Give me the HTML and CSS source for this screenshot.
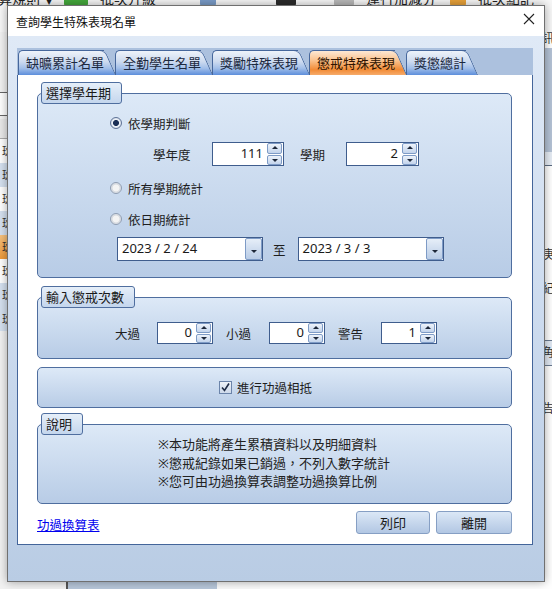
FILE: index.html
```html
<!DOCTYPE html>
<html lang="zh-Hant">
<head>
    <meta charset="UTF-8">
    <meta name="viewport" content="width=device-width, initial-scale=1.0">
    <title>查詢學生特殊表現名單</title>
    <link rel="stylesheet" href="styles.css">
</head>
<body>
    <!-- app behind the dialog -->
    <div class="app">
        <div class="app-bar">
            <span class="bar-text first">算規則</span>
            <span class="bar-caret">▾</span>
            <span class="bar-icon ic-green"></span>
            <span class="bar-text">批次升級</span>
            <span class="bar-icon ic-blue"></span>
            <span class="bar-icon ic-dark"></span>
            <span class="bar-icon ic-gray"></span>
            <span class="bar-text">運行加減分</span>
            <span class="bar-icon ic-orange"></span>
            <span class="bar-text">批次點記</span>
        </div>
        <div class="app-main">
            <div class="app-nav">
                <div class="nav-search"></div>
                <div class="nav-head"></div>
                <div class="nav-row">班</div>
                <div class="nav-row alt">班</div>
                <div class="nav-row">班</div>
                <div class="nav-row alt">班</div>
                <div class="nav-row sel">班</div>
                <div class="nav-row">班</div>
                <div class="nav-row alt">班</div>
                <div class="nav-row alt">班</div>
            </div>
            <div class="app-tree"></div>
            <div class="app-view">
                <div class="view-edge">
                    <div class="edge-top">訊</div>
                    <div class="edge-band"></div>
                    <div class="edge-light"></div>
                    <div class="edge-text t-a">庚</div>
                    <div class="edge-text t-b">紀</div>
                    <div class="edge-box">角</div>
                    <div class="edge-text t-c">告</div>
                </div>
            </div>
        </div>
    </div>

    <div class="dialog">
        <div class="titlebar">
            <span class="title">查詢學生特殊表現名單</span>
            <svg class="close" width="12" height="12" viewBox="0 0 12 12"><path d="M1 1L11 11M11 1L1 11" stroke="#222" stroke-width="1.1" fill="none"/></svg>
        </div>
        <div class="dialog-body">
            <div class="tabstrip">
                <div class="tab">缺曠累計名單</div>
                <div class="tab">全勤學生名單</div>
                <div class="tab">獎勵特殊表現</div>
                <div class="tab active">懲戒特殊表現</div>
                <div class="tab">獎懲總計</div>
            </div>
            <div class="panel">
                <div class="group g-term">
                    <div class="legend">選擇學年期</div>
                    <div class="row r-opt first"><span class="radio checked"></span>依學期判斷</div>
                    <div class="row r-term">
                        <span class="lbl w59">學年度</span>
                        <span class="spin w72"><span class="val">111</span><span class="btns"><span class="up"></span><span class="down"></span></span></span>
                        <span class="lbl w46 ml16">學期</span>
                        <span class="spin w73"><span class="val">2</span><span class="btns"><span class="up"></span><span class="down"></span></span></span>
                    </div>
                    <div class="row r-opt"><span class="radio"></span>所有學期統計</div>
                    <div class="row r-opt"><span class="radio"></span>依日期統計</div>
                    <div class="row r-date">
                        <span class="combo"><span class="date">2023 / 2 / 24</span><span class="drop"></span></span>
                        <span class="to">至</span>
                        <span class="combo"><span class="date">2023 / 3 / 3</span><span class="drop"></span></span>
                    </div>
                </div>

                <div class="group g-count">
                    <div class="legend">輸入懲戒次數</div>
                    <div class="row r-count">
                        <span class="lbl w42">大過</span>
                        <span class="spin small w56"><span class="val">0</span><span class="btns"><span class="up"></span><span class="down"></span></span></span>
                        <span class="lbl w43 ml13">小過</span>
                        <span class="spin small w56"><span class="val">0</span><span class="btns"><span class="up"></span><span class="down"></span></span></span>
                        <span class="lbl w43 ml13">警告</span>
                        <span class="spin small w56"><span class="val">1</span><span class="btns"><span class="up"></span><span class="down"></span></span></span>
                    </div>
                </div>

                <div class="group g-offset">
                    <div class="row r-check">
                        <span class="check"><svg width="11" height="11" viewBox="0 0 11 11"><path d="M2 5.5L4.5 8.5L9 1.5" stroke="#1e2b44" stroke-width="1.6" fill="none"/></svg></span>進行功過相抵
                    </div>
                </div>

                <div class="group g-note">
                    <div class="legend">說明</div>
                    <div class="notes">
                        ※本功能將產生累積資料以及明細資料<br>
                        ※懲戒紀錄如果已銷過，不列入數字統計<br>
                        ※您可由功過換算表調整功過換算比例
                    </div>
                </div>

                <div class="actions">
                    <a href="#" class="link">功過換算表</a>
                    <button type="button" class="btn w74">列印</button>
                    <button type="button" class="btn w76">離開</button>
                </div>
            </div>
        </div>
    </div>
</body>
</html>
```

FILE: styles.css
```css
* {box-sizing: border-box; margin: 0; padding: 0;}
body {width: 552px; height: 589px; overflow: hidden; position: relative; background: #fff; font-family: "Noto Sans", "Noto Sans CJK TC", sans-serif; font-size: 12.5px; color: #1e1e1e;}

/* background application */
.app {width: 552px; height: 589px; display: flex; flex-direction: column;}
.app-bar {height: 32px; background: #f7f7f7; display: flex; align-items: flex-start; overflow: hidden;}
.bar-text {font-size: 14px; line-height: 14px; margin-top: -8px; margin-left: 12px; color: #222;}
.bar-text.first {margin-left: -2px;}
.bar-caret {font-size: 12px; line-height: 10px; margin: -4px 0 0 6px;}
.bar-icon {width: 20px; height: 6px; margin-left: 14px; border-radius: 0 0 2px 2px;}
.ic-green {background: #45a83c; width: 24px; margin-left: 12px;}
.ic-blue {background: #7a9cc8; margin-left: 44px; width: 16px;}
.ic-dark {background: #2b2b2b; margin-left: 60px;}
.ic-gray {background: #b9b9b9; margin-left: 38px;}
.ic-orange {background: #e8a23a; width: 16px;}

.app-main {flex: 1; display: flex;}
.app-nav {width: 66px; background: #f2f2f2; padding-top: 60px;}
.nav-search {height: 24px; margin: 0 2px 0 -2px; background: #fff; border: 1px solid #666;}
.nav-head {height: 20px; margin-top: 3px; background: #e9e9e9; border-bottom: 1px solid #aaa;}
.nav-row {height: 24px; background: #fff; font-size: 11px; line-height: 24px; text-indent: 2px; color: #333;}
.nav-row.alt {background: #d5e1f0;}
.nav-row.sel {background: linear-gradient(#f7c27e, #ee9a3a);}
.app-tree {width: 151px; background: #b8c7da; border-left: 2px solid #555;}
.app-view {flex: 1; display: flex; justify-content: flex-end; background: #fff; border-left: 43px solid #fafafa;}
.view-edge {width: 10px; display: flex; flex-direction: column; font-size: 12px; color: #333;}
.edge-top {height: 16px; line-height: 14px;}
.edge-band {height: 104px; background: #b5c3d6;}
.edge-light {height: 14px; background: #e7edf5; border-bottom: 1px solid #5b6b80;}
.edge-text {line-height: 14px;}
.t-a {margin-top: 82px;}
.t-b {margin-top: 20px;}
.edge-box {margin-top: 44px; height: 26px; line-height: 24px; background: #e1e9f3; border-top: 1px solid #6a7a90; border-bottom: 1px solid #6a7a90;}
.t-c {margin-top: 36px;}

/* dialog window */
.dialog {position: absolute; left: 7px; top: 5px; width: 538px; height: 577px; border: 1px solid #707070; background: #fff; display: flex; flex-direction: column; box-shadow: 0 0 9px rgba(0, 0, 0, 0.35);}
.titlebar {height: 30px; display: flex; align-items: center; justify-content: space-between; padding: 0 9px 0 8px; background: #fff;}
.title {font-size: 12px; color: #111; margin-top: 1px;}
.close {margin-bottom: 5px;}
.dialog-body {flex: 1; padding: 12px 11px 0 9px; background: linear-gradient(#dfe9f6, #cbdaee 55%, #b9cce4);}

.tabstrip {height: 27px; display: flex; align-items: flex-end; padding-left: 1px; background: #acc1de;}
.tab {position: relative; z-index: 0; height: 25px; margin-right: 11px; padding-left: 7px; font-size: 13px; line-height: 24px; color: #1c2940; border: 1px solid #46679c; border-right: 0; border-bottom: 0; border-radius: 5px 0 0 0; background: linear-gradient(#eef3fa, #ccdaef 45%, #a2bfe9 72%, #5d8edb);}
.tab::after {content: ""; position: absolute; z-index: -1; top: -1px; bottom: 0; right: -1px; width: 16px; border: 1px solid #46679c; border-left: 0; border-bottom: 0; border-radius: 0 6px 0 0; background: inherit; transform: skewX(24deg); transform-origin: top left;}
.tab.active {color: #2e1300; background: linear-gradient(#fde8d4, #fac18c 40%, #f28b36 78%, #f6ab6b);}

.panel {height: 470px; background: #fff; border: 1px solid #44659a; border-top: 0; padding: 18px 20px 10px 19px;}

.group {border: 1px solid #4f6e9f; border-radius: 5px; background: linear-gradient(#dde9f7, #b8cce6);}
.legend {width: fit-content; height: 22px; margin: -12px 0 0 3px; padding: 0 10px 0 4px; font-size: 13px; line-height: 20px; color: #1a1a1a; border: 1px solid #4f6e9f; border-radius: 3px; background: linear-gradient(#e6eff9, #c4d6ed);}
.row {display: flex; align-items: center;}

.g-term {height: 185px;}
.r-opt {height: 18px; margin-top: 13px; padding-left: 72px;}
.r-opt.first {margin-top: 10px;}
.r-term {height: 24px; margin-top: 10px; padding-left: 115px;}
.r-date {height: 24px; margin-top: 9px; padding-left: 79px;}

.g-count {height: 62px; margin-top: 19px;}
.r-count {height: 22px; margin-top: 14px; padding-left: 77px;}

.g-offset {height: 41px; margin-top: 8px; padding-top: 10px;}
.r-check {height: 18px; padding-left: 181px;}

.g-note {height: 80px; margin-top: 16px;}
.notes {padding-left: 120px; font-size: 13px; line-height: 18.5px; color: #222;}

.lbl {flex: none;}
.w42 {width: 42px;} .w43 {width: 43px;} .w46 {width: 46px;} .w59 {width: 59px;}
.w56 {width: 56px;} .w72 {width: 72px;} .w73 {width: 73px;} .w74 {width: 74px;} .w76 {width: 76px;}
.ml13 {margin-left: 13px;} .ml16 {margin-left: 16px;}

.radio {width: 12px; height: 12px; margin-right: 6px; border-radius: 50%; border: 1px solid #8f9db2; background: radial-gradient(circle, #f4f4f4 0 3px, #d4d8de 4px, #eef0f3 6px); flex: none;}
.radio.checked {border-color: #5f7397; background: radial-gradient(circle, #1b2f56 0 2.6px, #eef2f8 3.4px, #c9d3e2 6px);}

.check {width: 13px; height: 13px; margin-right: 5px; border: 1px solid #6b84aa; background: linear-gradient(#eef2f8, #cdd9ea); display: flex; align-items: center; justify-content: center; flex: none;}

.spin {height: 24px; display: flex; background: #fff; border: 1px solid #3f5d8d; flex: none;}
.spin.small {height: 22px;}
.spin .val {flex: 1; text-align: right; padding-right: 4px; font-size: 13px; line-height: 21px; color: #1a1a1a;}
.spin.small .val {line-height: 19px;}
.btns {width: 16px; display: flex; flex-direction: column; gap: 1px; padding: 0 1px 0 0;}
.btns span {flex: 1; position: relative; border: 1px solid #7e9bc6; border-radius: 2px; background: linear-gradient(#eef3fa, #c3d4ec);}
.btns .up::after, .btns .down::after {content: ""; position: absolute; left: 50%; top: 50%; margin: -2px 0 0 -3px; border: 3px solid transparent;}
.btns .up::after {border-bottom: 3px solid #1d2739; border-top: 0;}
.btns .down::after {border-top: 3px solid #1d2739; border-bottom: 0; margin-top: -1px;}

.combo {width: 146px; height: 24px; display: flex; background: #fff; border: 1px solid #3f5d8d;}
.date {flex: 1; padding-left: 4px; font-size: 13px; line-height: 21px; color: #1a1a1a;}
.drop {width: 17px; position: relative; border: 1px solid #7e9bc6; border-radius: 2px; background: linear-gradient(#e6eef8, #b9cce6);}
.drop::after {content: ""; position: absolute; left: 5px; top: 11px; border: 3px solid transparent; border-top: 3px solid #1d2739; border-bottom: 0;}
.to {margin: 0 12px 0 10px;}

.actions {display: flex; align-items: flex-end; margin-top: 7px;}
.link {font-size: 12.5px; line-height: 18px; color: #0000ee; text-decoration: underline; margin-bottom: -1px;}
.btn {height: 23px; margin-left: 6px; font-family: inherit; font-size: 13px; line-height: 20px; color: #1a1a1a; border: 1px solid #869fc4; border-radius: 3px; background: linear-gradient(#dbe7f6, #b2c7e3);}
.link + .btn {margin-left: auto;}
```
